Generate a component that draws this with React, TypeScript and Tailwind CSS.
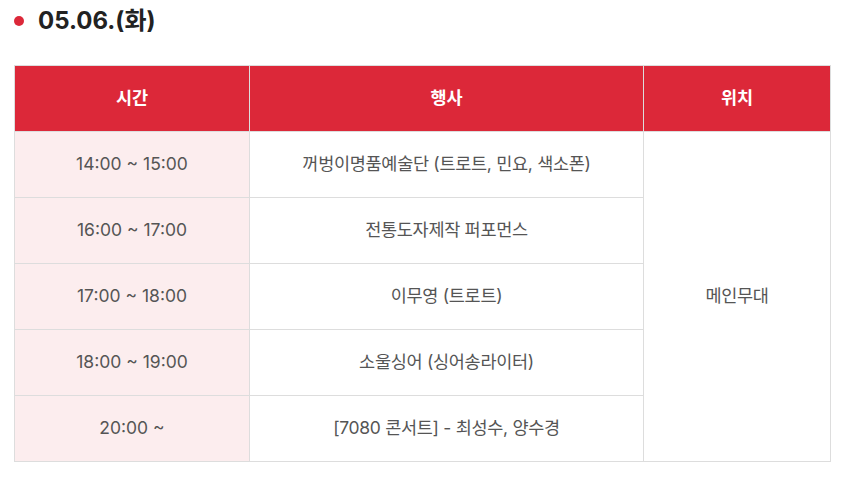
const rows = [
  { time: "14:00 ~ 15:00", event: "꺼벙이명품예술단 (트로트, 민요, 색소폰)" },
  { time: "16:00 ~ 17:00", event: "전통도자제작 퍼포먼스" },
  { time: "17:00 ~ 18:00", event: "이무영 (트로트)" },
  { time: "18:00 ~ 19:00", event: "소울싱어 (싱어송라이터)" },
  { time: "20:00 ~", event: "[7080 콘서트] - 최성수, 양수경" },
];

export default function App() {
  return (
    <div
      className="w-[842px] h-[478px] bg-white px-[14px] pt-[6px]"
      style={{ fontFamily: "Inter, 'Noto Sans CJK KR', sans-serif" }}
    >
      <h2 className="flex items-center gap-[14px] h-[30px] text-[24px] font-bold text-[#222]">
        <span className="w-[10px] h-[10px] rounded-full bg-[#dc2839]" />
        05.06.(화)
      </h2>
      <table className="mt-[29px] w-[816px] border-collapse table-fixed text-[17.5px]">
        <colgroup>
          <col className="w-[235px]" />
          <col className="w-[394px]" />
          <col className="w-[187px]" />
        </colgroup>
        <thead>
          <tr className="h-[66px] bg-[#dc2839] text-white font-bold">
            <th className="border border-[#ddd]">시간</th>
            <th className="border border-[#ddd]">행사</th>
            <th className="border border-[#ddd]">위치</th>
          </tr>
        </thead>
        <tbody className="text-[#555]">
          {rows.map((r, i) => (
            <tr key={i} className="h-[66px]">
              <td className="border border-[#ddd] bg-[#fcedee] text-center">{r.time}</td>
              <td className="border border-[#ddd] text-center tracking-[-0.3px]">{r.event}</td>
              {i === 0 && (
                <td rowSpan={5} className="border border-[#ddd] text-center tracking-[-0.3px]">
                  메인무대
                </td>
              )}
            </tr>
          ))}
        </tbody>
      </table>
    </div>
  );
}
